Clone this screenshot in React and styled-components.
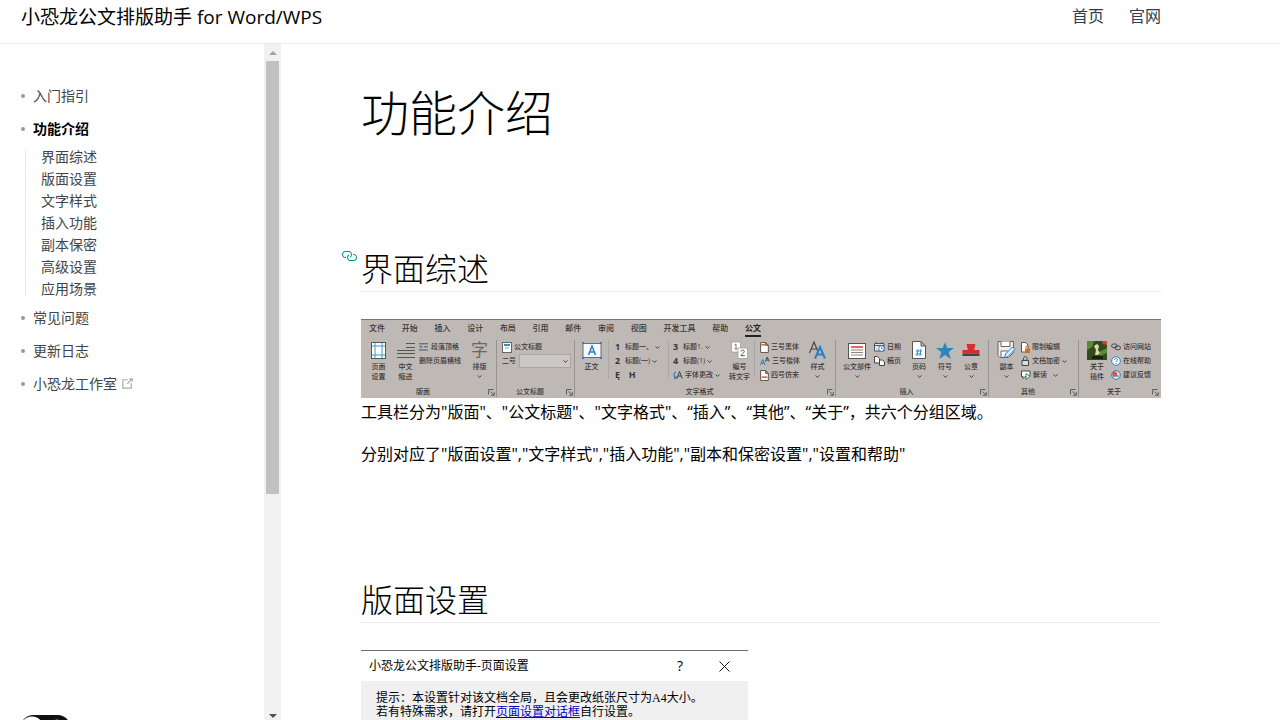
import React from "react";
import styled, { createGlobalStyle, css } from "styled-components";

const Global = createGlobalStyle`
  * { box-sizing: border-box; }
  body {
    margin: 0;
    overflow: hidden;
    background: #fff;
    color: #000;
    font: 400 16px/26px "Open Sans", "Noto Sans CJK SC", sans-serif;
  }
  h1, h2, p, ul { margin: 0; padding: 0; font-weight: inherit; }
  ul { list-style: none; }
  button { font: inherit; color: inherit; background: none; border: 0; padding: 0; }
  a { color: inherit; text-decoration: none; }
`;

const Page = styled.div`
  display: flex;
  flex-direction: column;
  height: 100vh;
`;

const Header = styled.header`
  display: flex;
  flex: none;
  justify-content: space-between;
  height: 44px;
  padding: 4px 119px 0 21px;
  border-bottom: 1px solid #eaeaea;
`;

const Brand = styled.a`
  font-size: 19px;
`;

const Nav = styled.nav`
  display: flex;
  gap: 25px;
  line-height: 24px;
  color: #2c3e50;
`;

const Body = styled.div`
  display: grid;
  grid-template-columns: 264px 17px minmax(0, 1fr);
  flex: 1;
  min-height: 0;
`;

const Sidebar = styled.aside`
  padding: 35px 20px 0;
  overflow: hidden;
  font-size: 14px;
  color: #3f454a;
`;

const Item = styled.a`
  display: flex;
  align-items: center;
  height: 33px;
  padding-left: 1px;
  ${(p) => p.$active && css`font-weight: 700; color: #000;`}
  &::before {
    content: "";
    width: 4px;
    height: 4px;
    margin-right: 8px;
    border-radius: 2px;
    background: #999;
  }
  svg { margin-left: 3px; fill: #aaa; }
`;

const SubList = styled.ul`
  display: grid;
  gap: 8px;
  margin: 5px;
  padding-left: 15px;
  border-left: 1px solid #eaeaea;
  line-height: 14px;
`;

const ThemeSwitch = styled.label`
  display: block;
  margin: 315px 0 0 1px;
  input {
    display: block;
    appearance: none;
    width: 49px;
    height: 24px;
    margin: 0;
    border-radius: 12px;
    background: radial-gradient(circle at 11px 13px, #fff 11px, transparent 12px),
      radial-gradient(circle at 36px 8px, #f0a030 3px, transparent 4px), #0f1114;
  }
`;

const Scrollbar = styled.div`
  display: flex;
  flex-direction: column;
  background: #f1f1f1;
`;

const ScrollButton = styled.button`
  display: flex;
  justify-content: center;
  align-items: ${(p) => (p.$end ? "flex-end" : "center")};
  height: 17px;
  padding-bottom: ${(p) => (p.$end ? "2px" : "0")};
  fill: ${(p) => (p.$end ? "#505050" : "#a3a3a3")};
`;

const Thumb = styled.div`
  flex: 433;
  margin: 0 2px;
  background: #c1c1c1;
`;

const TrackRest = styled.div`
  flex: 209;
`;

const Main = styled.main`
  overflow: hidden;
  padding: 39px 80px 0;
`;

const Article = styled.article`
  max-width: 800px;
`;

const Title = styled.h1`
  font-size: 48px;
  font-weight: 300;
  line-height: 60px;
  margin-bottom: 104px;
`;

const Heading = styled.h2`
  display: flex;
  margin-bottom: 27px;
  border-bottom: 1px solid #eaeaea;
  font-size: 32px;
  font-weight: 300;
  line-height: 44px;
`;

const Anchor = styled.a`
  width: 16px;
  margin: 1px 4px 0 -20px;
  line-height: 0;
  fill: #009688;
`;

const Para = styled.p`
  margin-bottom: ${(p) => (p.$last ? "111px" : "16px")};
`;

/* Ribbon */

const Ribbon = styled.section`
  height: 79px;
  margin-bottom: 1px;
  border-top: 1px solid #797573;
  background: #bfb9b6;
  color: #3a3635;
  font-size: 7px;
  line-height: 10px;
  font-weight: 500;
  white-space: nowrap;
  overflow: hidden;
`;

const Tabs = styled.div`
  display: flex;
  align-items: flex-start;
  justify-content: space-between;
  width: 392px;
  height: 19px;
  margin-left: 8px;
  padding-top: 2px;
  font-size: 8px;
`;

const Tab = styled.button`
  height: 15px;
  padding-bottom: 1px;
  line-height: 12px;
  border-bottom: 2px solid transparent;
  ${(p) => p.$active && css`font-weight: 700; color: #222; border-color: #222;`}
`;

const Groups = styled.div`
  display: grid;
  grid-template-columns: 136fr 78fr 261fr 153fr 90fr 82fr;
`;

const Group = styled.div`
  border-right: 1px solid ${(p) => (p.$last ? "transparent" : "#989390")};
  margin-top: 1px;
  height: 57px;
`;

const GroupBody = styled.div`
  display: flex;
  height: 46px;
  padding-left: ${(p) => p.$pad || 0}px;
`;

const GroupFoot = styled.div`
  display: flex;
  align-items: center;
  height: 11px;
  span { flex: 1; text-align: center; }
  svg { width: 7px; margin: 2px 1px 0 3px; }
`;

const Big = styled.button`
  display: flex;
  flex-direction: column;
  align-items: center;
  width: ${(p) => p.$w || 27}px;
  svg, b { display: block; height: 20px; margin-bottom: 2px; }
`;

const Glyph = styled.b`
  font-size: 17px;
  line-height: 20px;
  font-weight: 400;
  color: #666;
`;

const Rows = styled.div`
  width: ${(p) => p.$w}px;
  padding-left: ${(p) => p.$pad || 0}px;
`;

const Row = styled.div`
  display: flex;
  align-items: center;
  height: 14px;
  gap: 2px;
  svg { flex: none; }
`;

const Num = styled.b`
  width: 8px;
  font: 700 9px/14px "Open Sans", sans-serif;
`;

const Combo = styled.select`
  appearance: none;
  width: 52px;
  height: 14px;
  margin-left: 3px;
  border: 1px solid #aaa5a2;
  border-radius: 0;
  background: #cbc7c5;
`;

const ComboWrap = styled.label`
  display: flex;
  align-items: center;
  height: 14px;
  svg { margin-left: -8px; }
`;

const Rule = styled.i`
  width: 1px;
  height: 38px;
  background: #aca7a4;
`;

/* Page setup dialog */

const Dialog = styled.section`
  max-width: 387px;
  border-top: 1px solid #716d70;
  background: #f0f0f0;
  font-size: 12px;
`;

const DialogBar = styled.header`
  display: flex;
  align-items: center;
  height: 30px;
  padding: 0 18px 0 8px;
  background: #fff;
  span { flex: 1; }
  button { display: flex; align-items: center; margin-left: 36px; font-size: 14px; }
`;

const DialogText = styled.p`
  padding: 10px 15px 24px;
  line-height: 14px;
  font-family: "Liberation Serif", "Noto Sans CJK SC", serif;
  a { color: #0000c8; text-decoration: underline; }
`;

const Arrow = () => (
  <svg width="5" height="3" viewBox="0 0 5 3">
    <path d="M.5 .5 2.5 2.3 4.5 .5" fill="none" stroke="#444" />
  </svg>
);

const ArrowSlot = styled.span`
  height: 8px;
  padding-top: 3px;
  && svg { height: 3px; margin: 0; }
`;

const BigArrow = ({ children, w, label }) => (
  <Big $w={w}>
    {children}
    <span>{label}</span>
    <ArrowSlot><Arrow /></ArrowSlot>
  </Big>
);

const Launcher = () => (
  <svg width="7" height="7" viewBox="0 0 7 7">
    <path d="M.5 5.5v-5h5M2.5 2.5 6 6M6.3 3v3.3H3" fill="none" stroke="#555" strokeWidth=".9" />
  </svg>
);

const Foot = ({ children }) => (
  <GroupFoot><span>{children}</span><Launcher /></GroupFoot>
);

const PageSetupIcon = () => (
  <svg width="16" height="20" viewBox="0 0 16 20">
    <rect x=".5" y="2.5" width="14" height="16" fill="#fff" stroke="#555" />
    <path d="M4 3v15M11 3v15M1 6h13M1 15h13" stroke="#3f97cf" />
  </svg>
);
const IndentIcon = () => (
  <svg width="18" height="20" viewBox="0 0 18 20">
    <path d="M9 3.500h9M9 7.500h9M0 10.500h18M0 13.500h18M0 17.500h18" stroke="#555" />
  </svg>
);
const OutdentIcon = () => (
  <svg width="10" height="8" viewBox="0 0 10 8">
    <path d="M0 .8h9M5 3.8h4M0 7h9" stroke="#555" />
    <path d="M4 3.8H1M2.4 2.2.6 3.8l1.8 1.6" stroke="#2a7fc4" fill="none" />
  </svg>
);
const TitleDocIcon = () => (
  <svg width="10" height="11" viewBox="0 0 10 11">
    <rect x=".5" y=".5" width="9" height="10" fill="#fff" stroke="#666" />
    <path d="M2 3h6" stroke="#2a8fd4" strokeWidth="2" /><path d="M3 6h4" stroke="#999" />
  </svg>
);
const BodyTextIcon = () => (
  <svg width="20" height="20" viewBox="0 0 20 20">
    <rect x="1" y="3.500" width="18" height="14" fill="#f7f9fb" stroke="#5f6f7c" />
    <path d="M6.500 15 10 6l3.500 9M7.500 12h5" fill="none" stroke="#2a7fc4" strokeWidth="1.500" />
    <path d="M0 2h2v2H0zM18 2h2v2h-2zM0 17h2v2H0zM18 17h2v2h-2z" fill="#2a7fc4" />
  </svg>
);
const FontSwapIcon = () => (
  <svg width="10" height="10" viewBox="0 0 10 10">
    <path d="M4 8.500 6.500 1.500 9.300 8.500M5 6h3.500" fill="none" stroke="#444" />
    <path d="M3 2C.5 3 .3 6 2.500 8M1 8.500h2V6.300" fill="none" stroke="#2a7fc4" strokeWidth="1.200" />
  </svg>
);
const NumberTextIcon = () => (
  <svg width="17" height="20" viewBox="0 0 17 20">
    <rect x=".5" y="2" width="9" height="10" fill="#fff" stroke="#888" strokeWidth=".6" />
    <rect x="7" y="8" width="9.500" height="10.500" fill="#fff" stroke="#888" strokeWidth=".6" />
    <path d="M3.500 5 5 4v5M3.500 9h3" fill="none" stroke="#777" />
    <path d="M10 11.500c.3-2 3.500-1.800 3.300.2-.2 1.500-3.300 2.300-3.300 4h3.800" fill="none" stroke="#555" />
  </svg>
);
const DocIcon = ({ low }) => (
  <svg width="9" height="11" viewBox="0 0 8 10">
    <path d="M.5.5h4.500l2.500 2.500v6.500h-7zM5 .5V3h2.500" fill="#fff" stroke="#555" strokeWidth=".9" />
    <path d={low ? "M1.500 6.500h5" : "M1 2.500h3.500"} stroke="#e0702c" strokeWidth="1.500" />
  </svg>
);
const SmallAAIcon = () => (
  <svg width="10" height="10" viewBox="0 0 10 10">
    <path d="M.5 9 2.700 3.500 5 9M1.200 7.200h3" fill="none" stroke="#2a7fc4" />
    <path d="M5.500 5.500 7.200 1 9.200 5.500M6 4h2.500" fill="none" stroke="#444" />
  </svg>
);
const StyleIcon = () => (
  <svg width="17" height="20" viewBox="0 0 17 20">
    <path d="M.5 13 5 2l4.500 11M2 9h6" fill="none" stroke="#444" strokeWidth="1.200" />
    <path d="M6 18.500 11 7l5 11.500M8 14.500h6" fill="none" stroke="#2a7fc4" strokeWidth="2" />
  </svg>
);
const PartsIcon = () => (
  <svg width="18" height="20" viewBox="0 0 18 20">
    <rect x=".5" y="3.500" width="17" height="15" fill="#fff" stroke="#555" />
    <path d="M3 7h12" stroke="#d93a2b" strokeWidth="1.500" />
    <path d="M3 10h12M3 12.500h12M3 15h12" stroke="#777" strokeWidth=".9" />
  </svg>
);
const DateIcon = () => (
  <svg width="11" height="10" viewBox="0 0 11 10">
    <path d="M.5 1.500h9.500V9H.5zM.5 3.500h9.500M2.500 0v2M8 0v2" fill="#e5e5e5" stroke="#555" />
    <circle cx="7.500" cy="6.500" r="2.800" fill="#fff" stroke="#2a7fc4" />
    <path d="M7.500 5v1.700H9" fill="none" stroke="#2a7fc4" strokeWidth=".8" />
  </svg>
);
const SheetIcon = () => (
  <svg width="11" height="10" viewBox="0 0 11 10">
    <path d="M.5.500h3l2 2V7h-5z" fill="#fff" stroke="#444" />
    <path d="M5.500 4h3l2 2v3.500h-5z" fill="#fff" stroke="#444" />
  </svg>
);
const PageNoIcon = () => (
  <svg width="14" height="20" viewBox="0 0 14 20">
    <path d="M.5 1.500h8.500l4.500 4.500v12.500H.5zM9 1.500V6h4.500" fill="#fff" stroke="#555" />
    <path d="M6 9 5 16M9 9 8 16M3.800 11h6.200M3.500 14h6.200" stroke="#2a8fd4" />
  </svg>
);
const StarIcon = () => (
  <svg width="18" height="20" viewBox="0 0 18 20">
    <path d="m9 2 2.200 6H18l-5.300 4 2 7L9 15l-5.700 4 2-7L0 8h6.800z" fill="#2f83bf" />
  </svg>
);
const StampIcon = () => (
  <svg width="18" height="20" viewBox="0 0 18 20">
    <path d="M4.500 4h9L12 10.500H6z" fill="#d3302c" /><path d="M.5 10h17v3.500H.5z" fill="#d3302c" />
    <path d="M.5 13.500h17V16H.5z" fill="#444" />
  </svg>
);
const CopyIcon = () => (
  <svg width="19" height="20" viewBox="0 0 19 20">
    <path d="M1 1.500h15.500v11l-5 5H3l-2-2z" fill="#eee" stroke="#666" />
    <path d="M4 1.500v5h9v-5M4 17v-6h7" fill="#fff" stroke="#666" />
    <path d="m7.500 18 1-4 7-7 2.500 2.500-7 7z" fill="#d8ecfa" stroke="#2a7fc4" />
  </svg>
);
const LimitIcon = () => (
  <svg width="9" height="11" viewBox="0 0 9 11">
    <path d="M.5.500h4l2.500 2.500v7h-6.500z" fill="#fff" stroke="#555" />
    <path d="M4.800 6.500V5c0-1.500 2.500-1.500 2.500 0v1.500" fill="none" stroke="#d96b22" />
    <path d="M4 6.500h5V11H4z" fill="#d96b22" />
  </svg>
);
const LockIcon = () => (
  <svg width="9" height="10" viewBox="0 0 9 10">
    <path d="M2.500 4.500V2.500C2.500 0 6 0 6 2.500v2" fill="none" stroke="#444" />
    <path d="M1 4.500h6.500v5H1z" fill="#ddd" stroke="#444" />
  </svg>
);
const ReadIcon = () => (
  <svg width="10" height="10" viewBox="0 0 10 10">
    <path d="M.5 1h8.500v5.500H4L2 8.500v-2H.5z" fill="#fff" stroke="#444" />
    <path d="M5 3.500v6l4-3z" fill="#fff" stroke="#219653" />
  </svg>
);
const AboutImage = () => (
  <svg width="20" height="20" viewBox="0 0 20 20">
    <path d="M0 1h20v19H0z" fill="#304b1c" />
    <path d="M0 1h7l-2 6-5 3zM12 12l8-4v5l-7 3z" fill="#5d8934" />
    <path d="M15 1h5v4l-4-1z" fill="#d34622" />
    <path d="M7 6 10 4l2 2-1 4 2 3-2 2H8l1-5z" fill="#e0d6ae" />
    <path d="M5 16h11v3H5z" fill="#171f10" />
  </svg>
);
const ChainIcon = () => (
  <svg width="10" height="8" viewBox="0 0 10 8">
    <rect x=".6" y="1" width="5.500" height="3.600" rx="1.800" fill="none" stroke="#444" />
    <rect x="4" y="3" width="5.500" height="3.600" rx="1.800" fill="none" stroke="#444" />
  </svg>
);
const HelpIcon = () => (
  <svg width="10" height="10" viewBox="0 0 10 10">
    <circle cx="5" cy="5" r="4.300" fill="#fff" stroke="#2a7fc4" />
    <path d="M3.500 4c0-2 3-2 3-.2C6.500 5 5 4.800 5 6M5 7v1" fill="none" stroke="#2a7fc4" />
  </svg>
);
const FeedbackIcon = () => (
  <svg width="10" height="10" viewBox="0 0 10 10">
    <circle cx="5" cy="5" r="4.300" fill="#dcebf7" stroke="#2a7fc4" />
    <path d="M1 3 4 1l2 2v3L2 7z" fill="#e0553a" /><path d="M4 6h4" stroke="#2a7fc4" />
  </svg>
);

const tabs = ["文件", "开始", "插入", "设计", "布局", "引用", "邮件", "审阅", "视图", "开发工具", "帮助", "公文"];
const sections = ["界面综述", "版面设置", "文字样式", "插入功能", "副本保密", "高级设置", "应用场景"];

function RibbonBar() {
  return (
    <Ribbon>
      <Tabs>{tabs.map((t) => <Tab key={t} $active={t === "公文"}>{t}</Tab>)}</Tabs>
      <Groups>
        <Group>
          <GroupBody $pad={4}>
            <Big><PageSetupIcon /><span>页面</span><span>设置</span></Big>
            <Big><IndentIcon /><span>中文</span><span>缩进</span></Big>
            <Rows $w={47}>
              <Row><OutdentIcon />段落顶格</Row>
              <Row>删除页眉横线</Row>
            </Rows>
            <BigArrow label="排版"><Glyph>字</Glyph></BigArrow>
          </GroupBody>
          <Foot>版面</Foot>
        </Group>
        <Group>
          <GroupBody>
            <Rows $w={77} $pad={5}>
              <Row><TitleDocIcon />公文标题</Row>
              <ComboWrap>二号<Combo /><Arrow /></ComboWrap>
            </Rows>
          </GroupBody>
          <Foot>公文标题</Foot>
        </Group>
        <Group>
          <GroupBody>
            <Big $w={33}><BodyTextIcon /><span>正文</span></Big>
            <Rule />
            <Rows $w={59} $pad={6}>
              <Row><Num>1</Num>标题一、<Arrow /></Row>
              <Row><Num>2</Num>标题(一)<Arrow /></Row>
              <Row><Num>Ę</Num>&nbsp;<Num>H</Num></Row>
            </Rows>
            <Rule />
            <Rows $w={56} $pad={4}>
              <Row><Num>3</Num>标题1.<Arrow /></Row>
              <Row><Num>4</Num>标题(1)<Arrow /></Row>
              <Row><FontSwapIcon />字体更改<Arrow /></Row>
            </Rows>
            <Big $w={29}><NumberTextIcon /><span>编号</span><span>转文字</span></Big>
            <Rule />
            <Rows $w={48} $pad={5}>
              <Row><DocIcon />三号黑体</Row>
              <Row><SmallAAIcon />三号楷体</Row>
              <Row><DocIcon low />四号仿宋</Row>
            </Rows>
            <BigArrow w={29} label="样式"><StyleIcon /></BigArrow>
          </GroupBody>
          <Foot>文字格式</Foot>
        </Group>
        <Group>
          <GroupBody $pad={4}>
            <BigArrow w={34} label="公文部件"><PartsIcon /></BigArrow>
            <Rows $w={32}>
              <Row><DateIcon />日期</Row>
              <Row><SheetIcon />稿页</Row>
            </Rows>
            <BigArrow w={26} label="页码"><PageNoIcon /></BigArrow>
            <BigArrow w={26} label="符号"><StarIcon /></BigArrow>
            <BigArrow w={26} label="公章"><StampIcon /></BigArrow>
          </GroupBody>
          <Foot>插入</Foot>
        </Group>
        <Group>
          <GroupBody $pad={3}>
            <BigArrow w={29} label="副本"><CopyIcon /></BigArrow>
            <Rows $w={54}>
              <Row><LimitIcon />限制编辑</Row>
              <Row><LockIcon />文档加密 <Arrow /></Row>
              <Row><ReadIcon />解读 &nbsp;<Arrow /></Row>
            </Rows>
          </GroupBody>
          <Foot>其他</Foot>
        </Group>
        <Group $last>
          <GroupBody $pad={4}>
            <Big $w={28}><AboutImage /><span>关于</span><span>插件</span></Big>
            <Rows $w={46}>
              <Row><ChainIcon />访问网站</Row>
              <Row><HelpIcon />在线帮助</Row>
              <Row><FeedbackIcon />建议反馈</Row>
            </Rows>
          </GroupBody>
          <Foot>关于</Foot>
        </Group>
      </Groups>
    </Ribbon>
  );
}

export default function App() {
  return (
    <Page>
      <Global />
      <Header>
        <Brand href="#">小恐龙公文排版助手 for Word/WPS</Brand>
        <Nav><a href="#home">首页</a><a href="#site">官网</a></Nav>
      </Header>
      <Body>
        <Sidebar>
          <Item href="#guide">入门指引</Item>
          <Item href="#features" $active>功能介绍</Item>
          <SubList>
            {sections.map((s) => <li key={s}><a href={`#${s}`}>{s}</a></li>)}
          </SubList>
          <Item href="#faq">常见问题</Item>
          <Item href="#log">更新日志</Item>
          <Item href="#studio">
            小恐龙工作室
            <svg width="15" height="15" viewBox="0 0 100 100">
              <path d="M18.8,85.1h56c2.2,0,4-1.8,4-4v-32h-8v28h-48v-48h28v-8h-32c-2.2,0-4,1.8-4,4v56C14.8,83.3,16.6,85.1,18.8,85.1z" />
              <path d="M45.7 48.7 51.3 54.3 77.2 28.5V37.2H85.2V14.9H62.8V22.9H71.5z" />
            </svg>
          </Item>
          <ThemeSwitch><input type="checkbox" aria-label="深色模式" /></ThemeSwitch>
        </Sidebar>
        <Scrollbar>
          <ScrollButton aria-label="向上滚动">
            <svg width="8" height="4" viewBox="0 0 8 4"><path d="M0 4 4 0l4 4z" /></svg>
          </ScrollButton>
          <Thumb />
          <TrackRest />
          <ScrollButton $end aria-label="向下滚动">
            <svg width="8" height="4" viewBox="0 0 8 4"><path d="M0 0h8L4 4z" /></svg>
          </ScrollButton>
        </Scrollbar>
        <Main>
          <Article>
            <Title>功能介绍</Title>
            <Heading>
              <Anchor href="#界面综述" aria-label="界面综述">
                <svg width="16" height="16" viewBox="0 0 16 16">
                  <path d="M4 9h1v1H4c-1.5 0-3-1.69-3-3.5S2.55 3 4 3h4c1.45 0 3 1.69 3 3.5 0 1.41-.91 2.72-2 3.25V8.59c.58-.45 1-1.27 1-2.09C10 5.22 8.98 4 8 4H4c-.98 0-2 1.22-2 2.500S3 9 4 9zm9-3h-1v1h1c1 0 2 1.22 2 2.500S13.980 12 13 12H9c-.98 0-2-1.22-2-2.500 0-.83.42-1.64 1-2.090V6.250c-1.090.53-2 1.84-2 3.250C6 11.310 7.550 13 9 13h4c1.450 0 3-1.690 3-3.500S14.500 6 13 6z" />
                </svg>
              </Anchor>
              界面综述
            </Heading>
            <RibbonBar />
            <Para>工具栏分为"版面"、"公文标题"、"文字格式"、“插入”、“其他”、“关于”，共六个分组区域。</Para>
            <Para $last>分别对应了"版面设置","文字样式","插入功能","副本和保密设置","设置和帮助"</Para>
            <Heading>版面设置</Heading>
            <Dialog>
              <DialogBar>
                <span>小恐龙公文排版助手-页面设置</span>
                <button>?</button>
                <button aria-label="关闭">
                  <svg width="11" height="11" viewBox="0 0 11 11"><path d="m.5.5 10 10M10.500.5l-10 10" stroke="#111" /></svg>
                </button>
              </DialogBar>
              <DialogText>
                提示：本设置针对该文档全局，且会更改纸张尺寸为A4大小。<br />
                若有特殊需求，请打开<a href="#setup">页面设置对话框</a>自行设置。
              </DialogText>
            </Dialog>
          </Article>
        </Main>
      </Body>
    </Page>
  );
}
